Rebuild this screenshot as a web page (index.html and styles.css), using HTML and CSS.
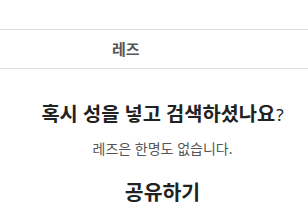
FILE: index.html
```html
<!DOCTYPE html>
<html lang="ko">
<head>
    <meta charset="UTF-8">
    <meta name="viewport" content="width=device-width, initial-scale=1.0">
    <title>레즈</title>
    <link rel="stylesheet" href="styles.css">
</head>
<body>
    <div class="top-space"></div>

    <div class="tab-bar">
        <span class="tab-title">레즈</span>
    </div>

    <div class="empty">
        <h2 class="empty-title">혹시 성을 넣고 검색하셨나요<span class="qmark">?</span></h2>
        <p class="empty-text">레즈은 한명도 없습니다.</p>
        <h3 class="share-title">공유하기</h3>
    </div>
</body>
</html>
```

FILE: styles.css
```css
* {
    margin: 0;
    padding: 0;
    box-sizing: border-box;
}

body {
    background: #fff;
    font-family: "Noto Sans", "Noto Sans CJK KR", sans-serif;
    color: #222;
}

.top-space {
    height: 29px;
}

.tab-bar {
    height: 40px;
    border-top: 1px solid #ddd;
    border-bottom: 1px solid #ddd;
    display: flex;
    align-items: center;
    padding-left: 112px;
}

.tab-title {
    font-size: 15px;
    font-weight: bold;
    color: #555;
    line-height: 20px;
}

.empty {
    padding-left: 17px;
    text-align: center;
}

.empty-title {
    margin-top: 33px;
    font-size: 19.8px;
    line-height: 24px;
    font-weight: bold;
    color: #222;
}

.qmark {
    font-weight: normal;
    font-size: 17px;
    margin-left: 1px;
}

.empty-text {
    margin-top: 13px;
    font-size: 14px;
    line-height: 18px;
    color: #555;
}

.share-title {
    margin-top: 21px;
    font-size: 20.5px;
    line-height: 26px;
    font-weight: bold;
    color: #222;
}
```
